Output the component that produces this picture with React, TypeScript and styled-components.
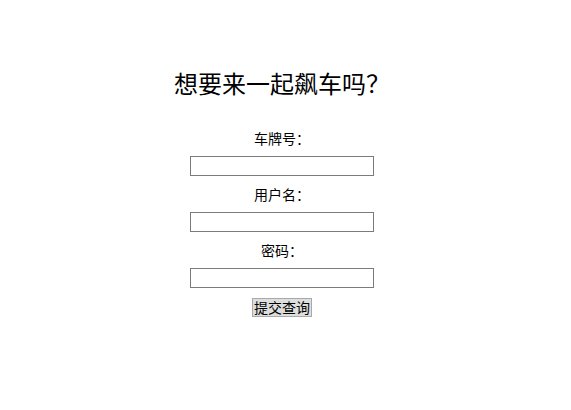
import React from "react";
import styled, { createGlobalStyle } from "styled-components";

const GlobalStyle = createGlobalStyle`
  body {
    margin: 8px;
    background: #ffffff;
    font-family: "Noto Sans CJK SC", "Liberation Sans", sans-serif;
    color: #000;
  }
`;

const Page = styled.div`
  width: 548px;
  padding-top: 57px;
  display: flex;
  flex-direction: column;
  align-items: center;
`;

const Title = styled.h2`
  margin: 0 0 28px;
  font-size: 24px;
  font-weight: normal;
  line-height: 35px;
`;

const Form = styled.form`
  display: flex;
  flex-direction: column;
  align-items: center;
  gap: 8px;
`;

const Label = styled.label`
  font-size: 14px;
  line-height: 20px;
`;

const Input = styled.input`
  box-sizing: border-box;
  width: 184px;
  height: 20px;
  margin: 0;
  padding: 1px 2px;
  border: 1px solid #7b7b7b;
  background: #fff;
  font-size: 13px;
`;

const SubmitButton = styled.button`
  box-sizing: border-box;
  margin-top: 2px;
  height: 19px;
  padding: 0 1px;
  border: 1px solid #a9a9a9;
  background: #dedede;
  color: #000;
  font-family: "Noto Sans CJK SC", "Liberation Sans", sans-serif;
  font-size: 14px;
  line-height: 17px;
`;

const fields = [
  { id: "plate", label: "车牌号：", type: "text" },
  { id: "user", label: "用户名：", type: "text" },
  { id: "pwd", label: "密码：", type: "password" },
];

export default function App() {
  return (
    <>
      <GlobalStyle />
      <Page>
        <Title>想要来一起飙车吗？</Title>
        <Form onSubmit={(e) => e.preventDefault()}>
          {fields.map((f) => (
            <React.Fragment key={f.id}>
              <Label htmlFor={f.id}>{f.label}</Label>
              <Input id={f.id} type={f.type} />
            </React.Fragment>
          ))}
          <SubmitButton type="submit">提交查询</SubmitButton>
        </Form>
      </Page>
    </>
  );
}
